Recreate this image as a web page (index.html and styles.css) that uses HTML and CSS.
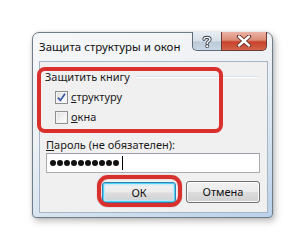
FILE: index.html
```html
<!DOCTYPE html>
<html lang="ru">
<head>
<meta charset="utf-8">
<link rel="stylesheet" href="styles.css">
</head>
<body>
<div class="window">
  <div class="titlebar">
    <span class="title">Защита структуры и окон</span>
    <div class="tbtns">
      <span class="tbtn help">
        <svg width="12" height="13" viewBox="0 0 12 13"><path d="M3 4.2 C3 1.8 9 1.6 9 4.4 C9 6.2 6.2 6.3 6.2 8.4" fill="none" stroke="#3a4350" stroke-width="3.2" stroke-linecap="round"/><path d="M3 4.2 C3 1.8 9 1.6 9 4.4 C9 6.2 6.2 6.3 6.2 8.4" fill="none" stroke="#fff" stroke-width="1.4" stroke-linecap="round"/><circle cx="6.2" cy="11.2" r="1.6" fill="#fff" stroke="#3a4350" stroke-width="0.9"/></svg>
      </span>
      <span class="tbtn close">
        <svg width="16" height="12" viewBox="0 0 16 12"><path d="M3 1.5 L13 10.5 M13 1.5 L3 10.5" stroke="#5a2a22" stroke-width="4.2" stroke-linecap="round"/><path d="M3 1.5 L13 10.5 M13 1.5 L3 10.5" stroke="#fff" stroke-width="2.4" stroke-linecap="round"/></svg>
      </span>
    </div>
  </div>
  <div class="client">
    <div class="group-head"><span class="group-label">Защитить книгу</span><span class="group-line"></span></div>
    <div class="check-row">
      <span class="checkbox checked">
        <svg width="9" height="9" viewBox="0 0 9 9"><path d="M1 4.6 L3.4 7.4 L8 0.8" fill="none" stroke="#3c5aa8" stroke-width="1.8"/></svg>
      </span>
      <span class="check-label"><u>с</u>труктуру</span>
    </div>
    <div class="check-row">
      <span class="checkbox"></span>
      <span class="check-label"><u>о</u>кна</span>
    </div>
    <div class="pass-label"><u>П</u>ароль (не обязателен):</div>
    <div class="input">
      <span class="dot"></span><span class="dot"></span><span class="dot"></span><span class="dot"></span><span class="dot"></span><span class="dot"></span><span class="dot"></span><span class="dot"></span><span class="dot"></span><span class="dot"></span><span class="caret"></span>
    </div>
    <div class="buttons">
      <span class="btn default">ОК</span>
      <span class="btn">Отмена</span>
    </div>
  </div>
</div>
<div class="mark mark-group"></div>
<div class="mark mark-ok"></div>
</body>
</html>
```
FILE: styles.css
```css
html, body {
  margin: 0;
  padding: 0;
}
body {
  position: relative;
  width: 306px;
  height: 251px;
  background: #ffffff;
  padding: 32px 0 0 32px;
  box-sizing: border-box;
  font-family: "Noto Sans", "Open Sans", sans-serif;
  font-size: 11px;
  color: #1a1a1a;
  overflow: hidden;
}
.window {
  width: 241px;
  height: 186px;
  box-sizing: border-box;
  border: 1px solid #707c88;
  border-radius: 7px 7px 4px 4px;
  padding: 0 4px 4px 6px;
  display: flex;
  flex-direction: column;
  background: linear-gradient(160deg, #f6f7f9 0%, #eef1f4 40%, #d6e3ef 70%, #b9d1ea 100%);
  box-shadow: 2px 3px 7px rgba(0,0,0,0.28), 0 0 2px rgba(0,0,0,0.15);
}
.titlebar {
  height: 28px;
  display: flex;
  justify-content: space-between;
  align-items: flex-start;
}
.title {
  padding-top: 6px;
  line-height: 16px;
  font-size: 11.5px;
  color: #111;
}
.tbtns {
  display: flex;
  margin-top: -1px;
  margin-right: 1px;
}
.tbtn {
  height: 19px;
  box-sizing: border-box;
  border: 1px solid #5f6b78;
  border-top: none;
  display: flex;
  align-items: center;
  justify-content: center;
}
.help {
  width: 29px;
  border-radius: 0 0 0 5px;
  border-right: none;
  background: linear-gradient(#e8edf2 0%, #d6dee7 50%, #bccad8 55%, #c9d6e3 100%);
}
.close {
  width: 46px;
  border-radius: 0 0 5px 0;
  border-color: #6b3a33;
  background: linear-gradient(#eab3a6 0%, #dc8c78 45%, #c9422c 55%, #d3644a 100%);
}
.client {
  flex: 1;
  border: 1px solid #a6b5c5;
  background: #f0f0f0;
  padding: 7px 7px 0 6px;
  display: flex;
  flex-direction: column;
}
.group-head {
  display: flex;
  align-items: center;
  height: 16px;
  margin-left: -1px;
}
.group-label {
  line-height: 16px;
  white-space: nowrap;
}
.group-line {
  flex: 1;
  height: 1px;
  background: #d5dfe5;
  border-bottom: 1px solid #fff;
  margin-left: 6px;
  margin-right: 1px;
}
.group-head + .check-row {
  margin-top: 2px;
}
.check-row {
  height: 20px;
  display: flex;
  align-items: center;
  padding-left: 9px;
}
.checkbox {
  width: 13px;
  height: 13px;
  box-sizing: border-box;
  border: 1px solid #8e8f8f;
  background: linear-gradient(135deg, #dcdcdc 0%, #f4f4f4 60%, #ffffff 100%);
  box-shadow: inset 0 0 0 1px #f4f4f4;
  display: flex;
  align-items: center;
  justify-content: center;
  margin-right: 3px;
}
.check-label {
  line-height: 16px;
}
.pass-label {
  margin-top: 10px;
  line-height: 16px;
}
.input {
  height: 20px;
  box-sizing: border-box;
  border: 1px solid #abadb3;
  border-top-color: #9a9ea6;
  background: #fff;
  display: flex;
  align-items: center;
  padding-left: 3px;
  gap: 1px;
}
.dot {
  width: 6px;
  height: 6px;
  border-radius: 50%;
  background: #111;
}
.caret {
  width: 1px;
  height: 14px;
  background: #000;
  margin-left: 2px;
}
.buttons {
  margin-top: 8px;
  display: flex;
  justify-content: flex-end;
  gap: 10px;
}
.btn {
  width: 74px;
  height: 22px;
  box-sizing: border-box;
  border: 1px solid #707070;
  border-radius: 3px;
  background: linear-gradient(#f2f2f2 0%, #ebebeb 48%, #dddddd 52%, #cfcfcf 100%);
  box-shadow: inset 0 0 0 1px #fbfbfb;
  display: flex;
  align-items: center;
  justify-content: center;
  line-height: 16px;
  color: #111;
}
.btn.default {
  border-color: #3c7fb1;
  box-shadow: inset 0 0 0 1px #48d3f8, inset 0 0 2px 2px #bfe8fa;
  margin-top: 1px;
  height: 21px;
}
.mark {
  position: absolute;
  box-sizing: border-box;
  border: 4px solid #d92f2d;
}
.mark-group {
  left: 37px;
  top: 67px;
  width: 186px;
  height: 66px;
  border-radius: 8px;
}
.mark-ok {
  left: 97px;
  top: 175px;
  width: 85px;
  height: 32px;
  border-width: 4.5px;
  border-radius: 11px;
  box-shadow: 0 0 1px rgba(120,0,0,0.6), inset 0 0 1px rgba(120,0,0,0.6);
}
```
